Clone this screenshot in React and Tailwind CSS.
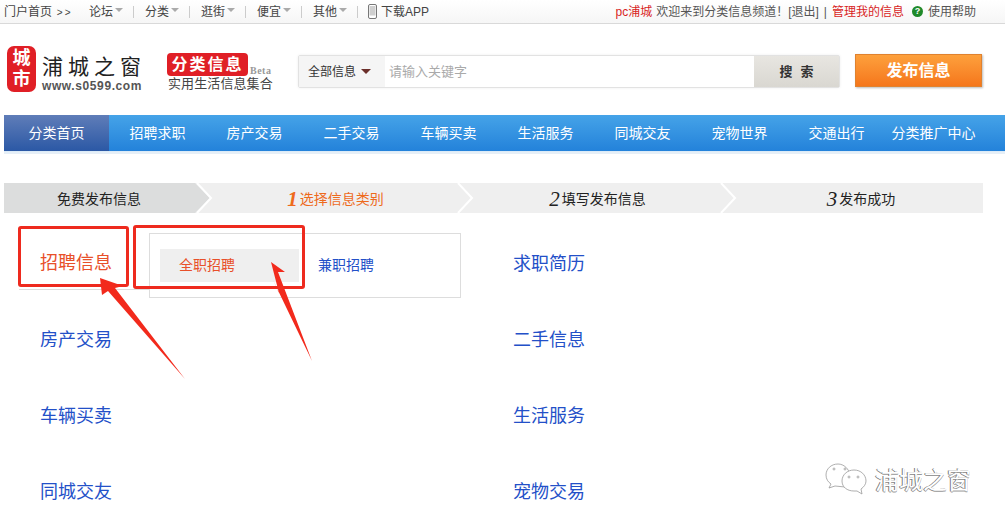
import React from "react";

const font = { cjk: "font-['Liberation_Sans','Noto_Sans_CJK_SC',sans-serif]" };

const topLinks = ["论坛", "分类", "逛街", "便宜", "其他"];
const navItems = ["招聘求职", "房产交易", "二手交易", "车辆买卖", "生活服务", "同城交友", "宠物世界", "交通出行", "分类推广中心"];
const rows = [
  ["招聘信息", "求职简历"],
  ["房产交易", "二手信息"],
  ["车辆买卖", "生活服务"],
  ["同城交友", "宠物交易"],
];

const Chevron = ({ className }) => (
  <svg className={className} width="18" height="30" viewBox="0 0 18 30" fill="none">
    <path d="M1 0 L15 15 L1 30" stroke="#ffffff" strokeWidth="2" />
  </svg>
);

const TopBar = () => (
  <div className="h-[24px] flex items-center justify-between border-b border-[#d9d9d9] bg-gradient-to-b from-white to-[#f6f6f6] pl-[4px] pr-[29px] text-[12px] text-[#444]">
    <div className="flex items-center">
      <span className="w-[74px] whitespace-nowrap">门户首页<span className="tracking-[2px] text-[10px]"> &gt;&gt;</span></span>
      {topLinks.map((link) => (
        <div key={link} className="flex items-center w-[56px] pl-[11px] h-[12px] border-r border-[#ccc]">
          <span>{link}</span>
          <span className="ml-[2px] mb-[3px] border-x-[4px] border-t-[4px] border-x-transparent border-t-[#aaa]" />
        </div>
      ))}
      <svg className="ml-[10px]" width="9" height="15" viewBox="0 0 9 15" fill="none">
        <rect x="0.5" y="0.5" width="8" height="14" rx="1.5" fill="#fff" stroke="#777" />
        <rect x="1.5" y="2" width="6" height="9.5" fill="#cfcfcf" />
      </svg>
      <span className="ml-[4px]">下载APP</span>
    </div>
    <div className="flex items-center">
      <span className="text-[#d81e1e]">pc浦城</span>
      <span className="ml-[4px] text-[#555]">欢迎来到分类信息频道！[退出]</span>
      <span className="mx-[5px] text-[#555]">|</span>
      <span className="text-[#d81e1e]">管理我的信息</span>
      <span className="ml-[8px] w-[11px] h-[11px] rounded-full bg-[#1f8a2a] text-white text-[9px] leading-[11px] font-bold text-center">?</span>
      <span className="ml-[5px] text-[#555]">使用帮助</span>
    </div>
  </div>
);

const Header = () => (
  <div className="h-[91px] flex items-start pl-[7px]">
    <div className="mt-[22px] w-[29px] h-[46px] rounded-[7px] bg-[#e01f26] text-white text-[18px] font-bold leading-[21px] text-center pt-[2px]">
      <div>城</div>
      <div>市</div>
    </div>
    <div className="ml-[6px] mt-[29px] w-[100px]">
      <div className="text-[21px] leading-[24px] tracking-[5px] text-[#222] whitespace-nowrap font-['Noto_Sans_CJK_SC',sans-serif]">浦城之窗</div>
      <div className="mt-[2px] text-[12px] leading-[14px] font-bold tracking-[0.6px] text-[#555] whitespace-nowrap">www.s0599.com</div>
    </div>
    <div className="ml-[25px] mt-[29px] w-[112px]">
      <div className="flex items-end">
        <div className="w-[81px] h-[23px] rounded-[4px] bg-[#e01f26] text-white text-[16px] font-bold leading-[23px] text-center tracking-[2px]">分类信息</div>
        <span className="ml-[2px] text-[10px] leading-[11px] font-bold tracking-[0.5px] text-[#999] font-['Liberation_Serif',serif]">Beta</span>
      </div>
      <div className="ml-[1px] text-[13px] leading-[15px] tracking-[0.1px] text-[#444] whitespace-nowrap">实用生活信息集合</div>
    </div>
    <div className="ml-[19px] mt-[31px] w-[542px] h-[33px] flex border border-[#e2e2e2] rounded-[2px] shadow-[0_0_3px_#eee]">
      <div className="w-[86px] bg-[#f5f5f5] flex items-center pl-[9px] text-[12px] text-[#333]">
        全部信息
        <span className="ml-[5px] border-x-[5px] border-t-[5px] border-x-transparent border-t-[#6b2f2a]" />
      </div>
      <div className="w-[369px] flex items-center pl-[4px] text-[13px] text-[#aaa]">请输入关键字</div>
      <div className="flex-1 bg-gradient-to-b from-[#e8e6e1] to-[#d9d7d1] flex items-center justify-center text-[13px] font-bold tracking-[8px] pl-[8px] text-[#333]">搜索</div>
    </div>
    <div className="ml-[15px] mt-[30px] w-[127px] h-[33px] border border-[#e0822f] bg-gradient-to-b from-[#fda03c] to-[#f5761a] shadow-[1px_1px_2px_#bbb] text-white text-[16px] font-bold flex items-center justify-center">发布信息</div>
  </div>
);

const Nav = () => (
  <div className="ml-[4px] h-[37px] flex border-b-[1px] border-b-[#dcebf7] shadow-[0_2px_0_#e6eff7] bg-gradient-to-b from-[#45a3e8] to-[#2382da] text-[14px] text-white">
    <div className="w-[105px] flex items-center justify-center bg-gradient-to-b from-[#5f7db8] to-[#2b58a5]">分类首页</div>
    {navItems.map((item) => (
      <div key={item} className="w-[97px] flex items-center justify-center whitespace-nowrap">{item}</div>
    ))}
  </div>
);

const Steps = () => (
  <div className="mt-[31px] ml-[4px] w-[979px] h-[30px] flex bg-[#efefef] text-[14px] text-[#222]">
    <div className="relative w-[191px] bg-[#dcdddd] flex items-center justify-center pr-[1px] pt-[2px]">
      免费发布信息
      <span className="absolute left-full top-0 border-y-[15px] border-l-[15px] border-y-transparent border-l-[#dcdddd]" />
      <Chevron className="absolute left-[192px] top-0 z-10" />
    </div>
    <div className="relative w-[263px] flex items-center justify-center text-[#ee6a1c] pl-[18px] pt-[2px]">
      <i className="text-[21px] font-bold mr-[2px] leading-[20px] font-['Liberation_Serif',serif]">1</i>选择信息类别
      <Chevron className="absolute left-[262px] top-0" />
    </div>
    <div className="relative w-[263px] flex items-center justify-center pl-[16px] pt-[2px]">
      <i className="text-[21px] mr-[2px] leading-[20px] font-['Liberation_Serif',serif]">2</i>填写发布信息
      <Chevron className="absolute left-[262px] top-0" />
    </div>
    <div className="w-[262px] flex items-center justify-center pl-[18px] pt-[2px]">
      <i className="text-[21px] mr-[2px] leading-[20px] font-['Liberation_Serif',serif]">3</i>发布成功
    </div>
  </div>
);

const Categories = () => (
  <div className="relative mt-[13px] ml-[19px] grid grid-cols-[473px_1fr] auto-rows-[76px] text-[18px] text-[#2350c8]">
    {rows.map(([left, right], i) => (
      <React.Fragment key={left}>
        <div className={i === 0 ? "pl-[21px] pt-[11px] h-[64px] w-[130px] flex items-center border-b border-[#ddd] text-[#e8502a]" : "pl-[21px] flex items-center h-[76px]"}>
          {left}
        </div>
        <div className="pl-[21px] flex items-center h-[76px]">{right}</div>
      </React.Fragment>
    ))}
    <div className="absolute left-[130px] top-[7px] w-[312px] h-[65px] border border-[#ddd] bg-white flex items-center text-[14px]">
      <div className="ml-[10px] w-[139px] h-[33px] bg-[#efefef] flex items-center pl-[19px] text-[#e8502a]">全职招聘</div>
      <div className="ml-[19px]">兼职招聘</div>
    </div>
  </div>
);

const Annotations = () => (
  <>
    <div className="absolute left-[18px] top-[226px] w-[111px] h-[61px] border-[3px] border-[#ee2a1e] rounded-[3px]" />
    <div className="absolute left-[133px] top-[225px] w-[172px] h-[64px] border-[3px] border-[#ee2a1e] rounded-[3px]" />
    <svg className="absolute left-0 top-0" width="1005" height="523" viewBox="0 0 1005 523">
      <path d="M100 278 L123 286 L115 288 L185 379 L108 291 L102 295 Z" fill="#f22a1c" />
      <path d="M271 262 L285 272 L278 272 L312 361 L273 280 L279 293 Z" fill="#f22a1c" />
      <g fill="#fff" stroke="#9a9a9a" strokeWidth="0.8">
        <path d="M838 464 C831 464 826 469 826 475 C826 479 828 482 831 484 L829 488 L835 486 L845 487 L850 475 C849 469 844 464 838 464 Z" />
        <path d="M854 470 C847 470 842 475 842 481 C842 487 847 491 854 491 L857 491 L862 494 L861 489 C864 487 866 484 866 481 C866 475 861 470 854 470 Z" />
        <circle cx="834" cy="469" r="1" />
        <circle cx="845" cy="469" r="1" />
        <circle cx="849" cy="477" r="1" />
        <circle cx="858" cy="477" r="1" />
      </g>
    </svg>
    <div className="absolute left-[875px] top-[464px] text-[24px] leading-[30px] text-white [text-shadow:-1px_0_0_#777,0_1px_0_#999] font-['Noto_Sans_CJK_SC',sans-serif]">浦城之窗</div>
  </>
);

export default function App() {
  return (
    <div className={`relative w-[1005px] h-[523px] overflow-hidden bg-white ${font.cjk}`}>
      <TopBar />
      <Header />
      <Nav />
      <Steps />
      <Categories />
      <Annotations />
    </div>
  );
}
